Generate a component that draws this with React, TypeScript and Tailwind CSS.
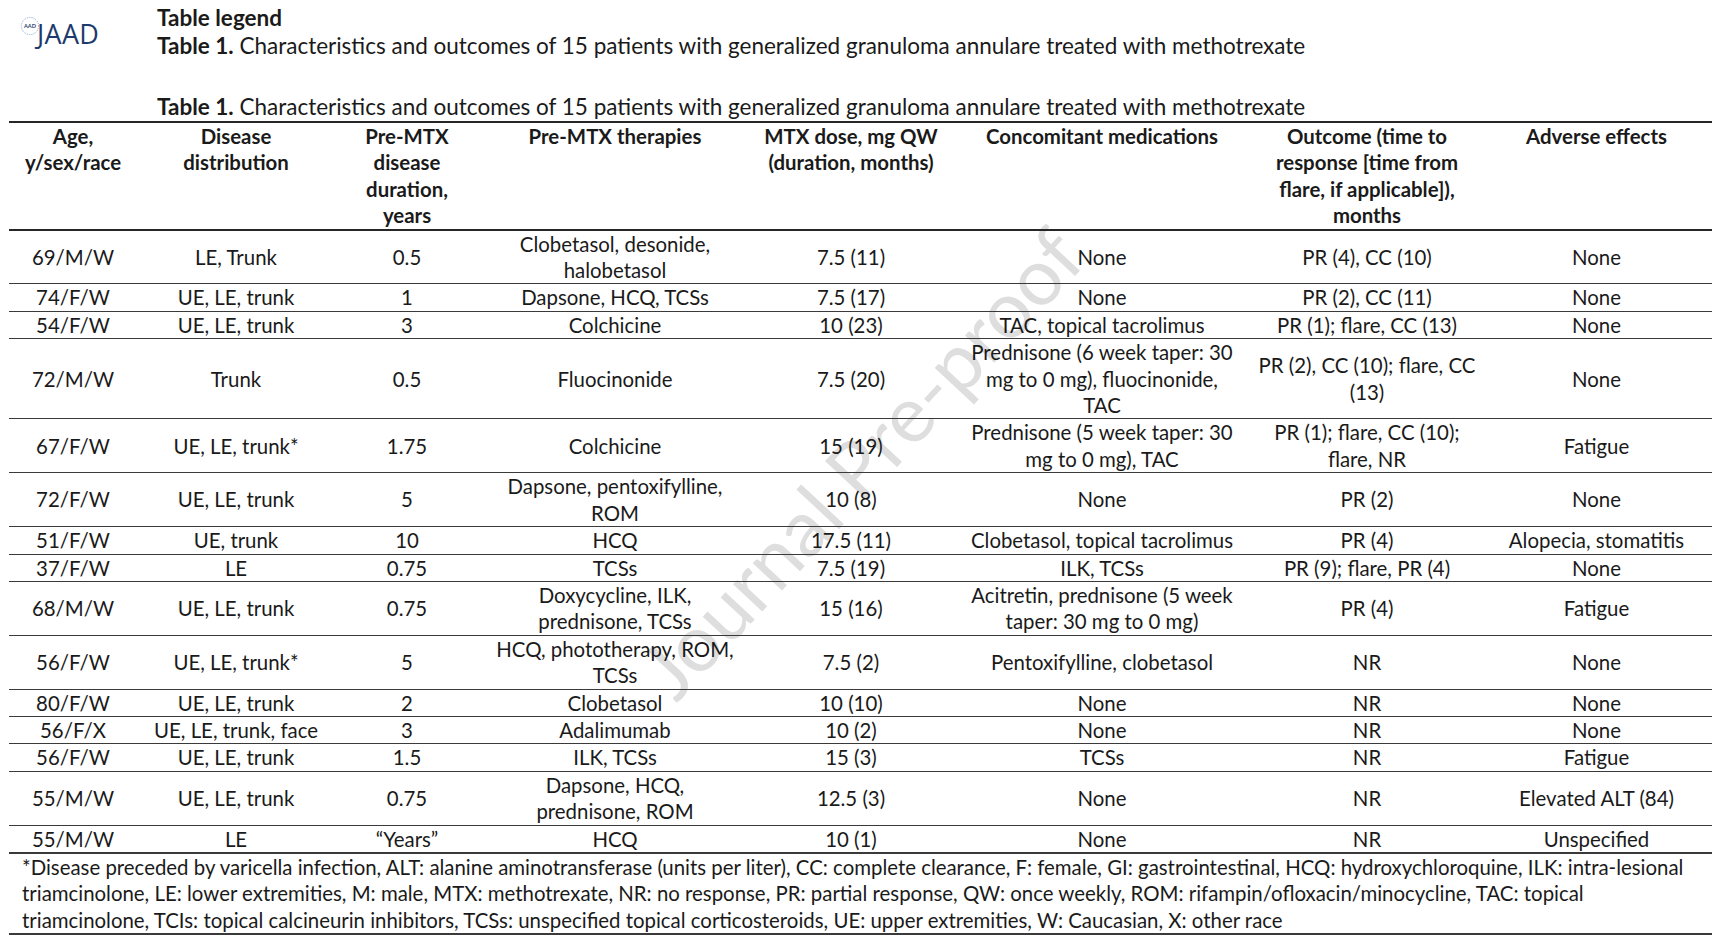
import React from "react";

type Row = string[];

const cols = [128, 198, 144, 272, 200, 302, 228, 231];

const header: Row = [
  "Age,\ny/sex/race",
  "Disease\ndistribution",
  "Pre-MTX\ndisease\nduration,\nyears",
  "Pre-MTX therapies",
  "MTX dose, mg QW\n(duration, months)",
  "Concomitant medications",
  "Outcome (time to\nresponse [time from\nflare, if applicable]),\nmonths",
  "Adverse effects",
];

const rows: Row[] = [
  ["69/M/W", "LE, Trunk", "0.5", "Clobetasol, desonide,\nhalobetasol", "7.5 (11)", "None", "PR (4), CC (10)", "None"],
  ["74/F/W", "UE, LE, trunk", "1", "Dapsone, HCQ, TCSs", "7.5 (17)", "None", "PR (2), CC (11)", "None"],
  ["54/F/W", "UE, LE, trunk", "3", "Colchicine", "10 (23)", "TAC, topical tacrolimus", "PR (1); flare, CC (13)", "None"],
  [
    "72/M/W",
    "Trunk",
    "0.5",
    "Fluocinonide",
    "7.5 (20)",
    "Prednisone (6 week taper: 30\nmg to 0 mg), fluocinonide,\nTAC",
    "PR (2), CC (10); flare, CC\n(13)",
    "None",
  ],
  [
    "67/F/W",
    "UE, LE, trunk*",
    "1.75",
    "Colchicine",
    "15 (19)",
    "Prednisone (5 week taper: 30\nmg to 0 mg), TAC",
    "PR (1); flare, CC (10);\nflare, NR",
    "Fatigue",
  ],
  ["72/F/W", "UE, LE, trunk", "5", "Dapsone, pentoxifylline,\nROM", "10 (8)", "None", "PR (2)", "None"],
  ["51/F/W", "UE, trunk", "10", "HCQ", "17.5 (11)", "Clobetasol, topical tacrolimus", "PR (4)", "Alopecia, stomatitis"],
  ["37/F/W", "LE", "0.75", "TCSs", "7.5 (19)", "ILK, TCSs", "PR (9); flare, PR (4)", "None"],
  [
    "68/M/W",
    "UE, LE, trunk",
    "0.75",
    "Doxycycline, ILK,\nprednisone, TCSs",
    "15 (16)",
    "Acitretin, prednisone (5 week\ntaper: 30 mg to 0 mg)",
    "PR (4)",
    "Fatigue",
  ],
  ["56/F/W", "UE, LE, trunk*", "5", "HCQ, phototherapy, ROM,\nTCSs", "7.5 (2)", "Pentoxifylline, clobetasol", "NR", "None"],
  ["80/F/W", "UE, LE, trunk", "2", "Clobetasol", "10 (10)", "None", "NR", "None"],
  ["56/F/X", "UE, LE, trunk, face", "3", "Adalimumab", "10 (2)", "None", "NR", "None"],
  ["56/F/W", "UE, LE, trunk", "1.5", "ILK, TCSs", "15 (3)", "TCSs", "NR", "Fatigue"],
  ["55/M/W", "UE, LE, trunk", "0.75", "Dapsone, HCQ,\nprednisone, ROM", "12.5 (3)", "None", "NR", "Elevated ALT (84)"],
  ["55/M/W", "LE", "\u201CYears\u201D", "HCQ", "10 (1)", "None", "NR", "Unspecified"],
];

function Logo() {
  return (
    <div className="flex items-start">
      <svg width="20" height="20" viewBox="0 0 20 20" className="mt-[1px]">
        <circle cx="10" cy="10" r="8.6" fill="white" stroke="#7f9fd4" strokeWidth="1" strokeDasharray="1 1.2" />
        <text x="10" y="11.8" textAnchor="middle" fontSize="5.6" fontWeight="700" fill="#2a3f6e" fontFamily="Lato, sans-serif">
          AAD
        </text>
      </svg>
      <span className="mt-[4px] -ml-[3px] text-[27px] leading-[29px] font-medium tracking-[0.3px] text-[#1d3a6c] font-['Open_Sans',sans-serif]">
        JAAD
      </span>
    </div>
  );
}

export default function App() {
  return (
    <div className="relative w-[1730px] h-[948px] overflow-hidden bg-white text-[#1a1a1a] font-['Lato','Carlito',sans-serif] text-[20.4px]">
      <div className="pointer-events-none absolute left-[860px] top-[462px] -translate-x-1/2 -translate-y-1/2 rotate-[-47deg] whitespace-nowrap text-[79px] leading-none text-[#dedede] font-['Lato',sans-serif]">
        Journal Pre-proof
      </div>

      <div className="relative z-10 pl-[9px]">
        <div className="flex">
          <div className="w-[148px] pt-[15px] pl-[11px]">
            <Logo />
          </div>
          <div className="pt-[4px] leading-[28px] text-[22.5px]">
            <div className="font-bold">Table legend</div>
            <div>
              <span className="font-bold">Table 1.</span> Characteristics and outcomes of 15 patients with generalized
              granuloma annulare treated with methotrexate
            </div>
          </div>
        </div>

        <div className="mt-[32px] pl-[148px] leading-[29px] text-[22.5px]">
          <span className="font-bold">Table 1.</span> Characteristics and outcomes of 15 patients with generalized
          granuloma annulare treated with methotrexate
        </div>

        <table className="w-[1703px] table-fixed border-collapse leading-[26.4px]">
          <colgroup>
            {cols.map((w, i) => (
              <col key={i} style={{ width: w }} />
            ))}
          </colgroup>
          <thead>
            <tr>
              {header.map((h, i) => (
                <th
                  key={i}
                  className="border-t-2 border-b-2 border-[#262626] px-[4px] p-0 align-top text-center font-bold whitespace-pre-line"
                >
                  {h}
                </th>
              ))}
            </tr>
          </thead>
          <tbody>
            {rows.map((r, ri) => (
              <tr key={ri}>
                {r.map((c, ci) => (
                  <td
                    key={ci}
                    className={
                      ri === rows.length - 1
                        ? "border-b-2 border-[#3a3a3a] px-[4px] py-0 align-middle text-center whitespace-pre-line"
                        : "border-b border-[#3a3a3a] px-[4px] py-0 align-middle text-center whitespace-pre-line"
                    }
                  >
                    {c}
                  </td>
                ))}
              </tr>
            ))}
          </tbody>
        </table>

        <div className="w-[1703px] border-b-2 border-[#3a3a3a] pl-[13px] leading-[26.4px]">
          *Disease preceded by varicella infection, ALT: alanine aminotransferase (units per liter), CC: complete
          clearance, F: female, GI: gastrointestinal, HCQ: hydroxychloroquine, ILK: intra-lesional
          <br />
          triamcinolone, LE: lower extremities, M: male, MTX: methotrexate, NR: no response, PR: partial response, QW:
          once weekly, ROM: rifampin/ofloxacin/minocycline, TAC: topical
          <br />
          triamcinolone, TCIs: topical calcineurin inhibitors, TCSs: unspecified topical corticosteroids, UE: upper
          extremities, W: Caucasian, X: other race
        </div>
      </div>
    </div>
  );
}
